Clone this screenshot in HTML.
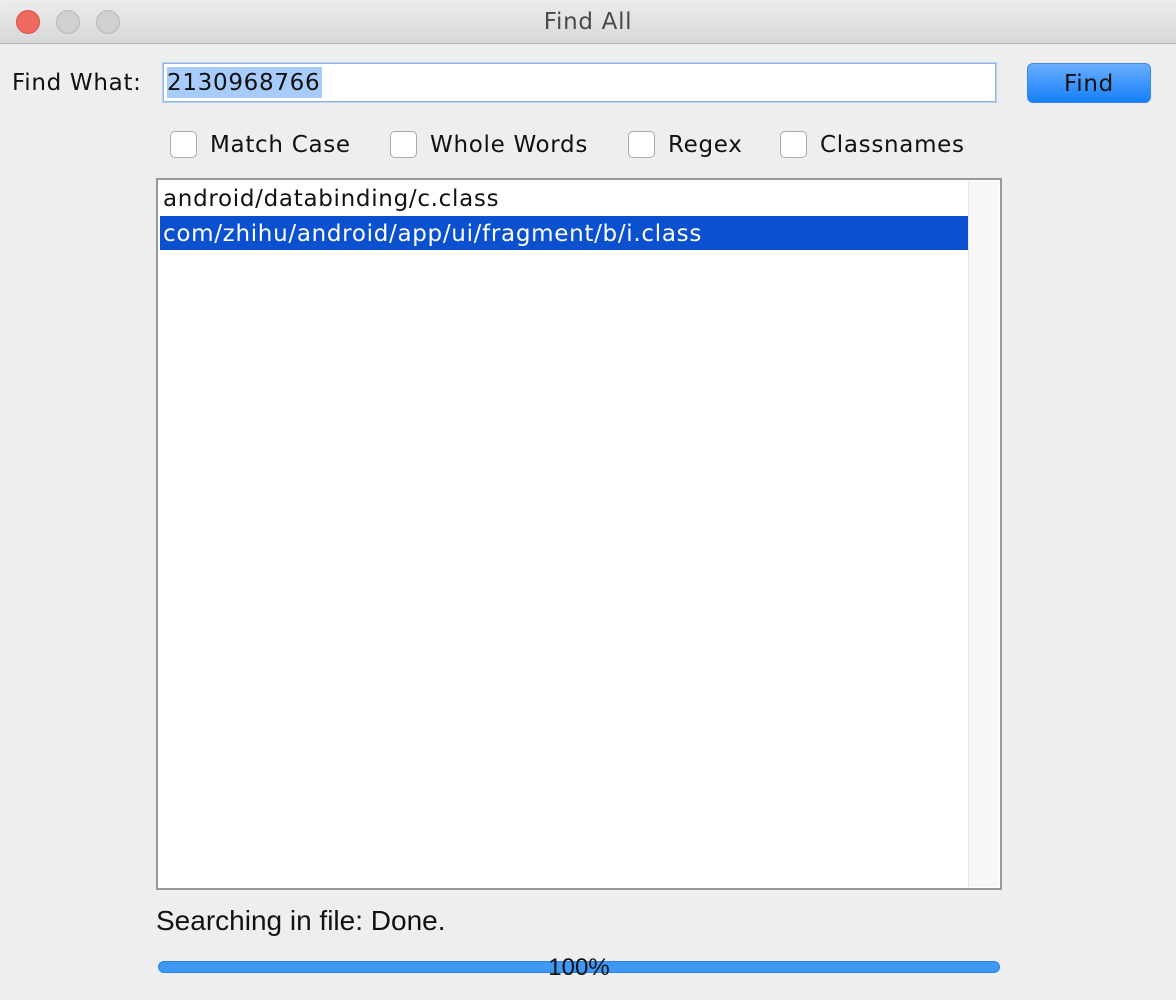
<!DOCTYPE html>
<html><head><style>
*{margin:0;padding:0;box-sizing:border-box}
body{width:1176px;height:1000px;background:#eeeeee;position:relative;overflow:hidden;font-family:"DejaVu Sans","Liberation Sans",sans-serif;color:#111}
.abs{position:absolute}
.tb{left:0;top:0;width:1176px;height:44px;background:linear-gradient(#ececec,#d8d8d8);border-bottom:1px solid #b8b8b8;border-radius:8px 8px 0 0}
.dot{width:24px;height:24px;border-radius:50%;top:10px}
.t{font-size:23px;letter-spacing:0.7px;white-space:nowrap}
.cb{width:27px;height:27px;background:#fff;border:1px solid #aaa;border-radius:5px;top:131px}
</style></head><body>
<div class="abs tb"></div>
<div class="abs dot" style="left:16px;background:#ee6a5e;border:1px solid #d5534a"></div>
<div class="abs dot" style="left:56px;background:#d0d0d0;border:1px solid #b8b8b8"></div>
<div class="abs dot" style="left:96px;background:#d0d0d0;border:1px solid #b8b8b8"></div>
<div class="abs t" style="left:0;width:1176px;text-align:center;top:9px;color:#4a4a4a;font-size:23px">Find All</div>

<div class="abs t" style="left:12px;top:70px">Find What:</div>
<div class="abs" style="left:163px;top:63px;width:833px;height:39px;background:#fff;border:1px solid #8fb4e6;box-shadow:0 0 0 1px #b9d1f0"></div>
<div class="abs t" style="left:167px;top:67px;height:31px;line-height:33px;background:#a7cbfb;padding:0 2px 0 0">2130968766</div>
<div class="abs" style="left:1027px;top:63px;width:124px;height:40px;border-radius:6px;background:linear-gradient(#69aefc,#1580fb);border:1px solid #3d86e6"></div>
<div class="abs t" style="left:1027px;width:124px;text-align:center;top:71px">Find</div>

<div class="abs cb" style="left:170px"></div><div class="abs t" style="left:210px;top:132px">Match Case</div>
<div class="abs cb" style="left:390px"></div><div class="abs t" style="left:430px;top:132px">Whole Words</div>
<div class="abs cb" style="left:628px"></div><div class="abs t" style="left:668px;top:132px">Regex</div>
<div class="abs cb" style="left:780px"></div><div class="abs t" style="left:820px;top:132px">Classnames</div>

<div class="abs" style="left:156px;top:178px;width:846px;height:712px;background:#fff;border:2px solid #999"></div>
<div class="abs" style="left:968px;top:181px;width:31px;height:706px;background:#f8f8f8;border-left:1px solid #e4e4e4"></div>
<div class="abs" style="left:160px;top:216px;width:808px;height:34px;background:#0a50cf"></div>
<div class="abs t" style="left:163px;top:186px">android/databinding/c.class</div>
<div class="abs t" style="left:163px;top:221px;color:#fff">com/zhihu/android/app/ui/fragment/b/i.class</div>

<div class="abs t" style="left:156px;top:905px;font-family:'Liberation Sans',sans-serif;font-size:28px;letter-spacing:0">Searching in file: Done.</div>
<div class="abs" style="left:158px;top:961px;width:842px;height:12px;border-radius:6px;background:#3d99f5;border:1px solid #2d84e0"></div>
<div class="abs t" style="left:158px;width:842px;text-align:center;top:954px;font-family:'Liberation Sans',sans-serif;font-size:24px;letter-spacing:0">100%</div>
</body></html>
